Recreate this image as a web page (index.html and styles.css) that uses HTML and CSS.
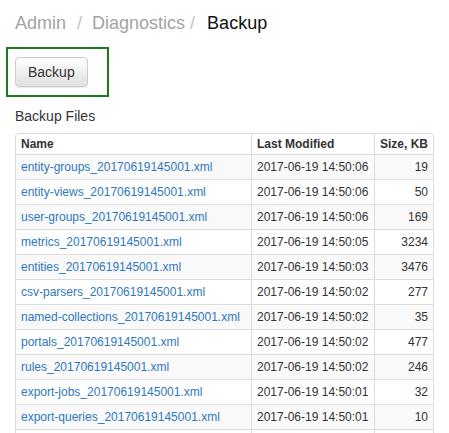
FILE: index.html
```html
<!DOCTYPE html>
<html>
<head>
<meta charset="utf-8">
<link rel="stylesheet" href="styles.css">
</head>
<body>
<div class="page">
  <div class="crumbs">
    <span class="crumb">Admin</span><span class="sep sep-a">/</span><span class="crumb">Diagnostics</span><span class="sep sep-b">/</span><span class="crumb active">Backup</span>
  </div>
  <div class="highlight">
    <button class="btn">Backup</button>
  </div>
  <div class="title">Backup Files</div>
  <table class="files">
    <thead>
      <tr><th class="c-name">Name</th><th class="c-mod">Last Modified</th><th class="c-size">Size, KB</th></tr>
    </thead>
    <tbody>
      <tr><td><a href="#">entity-groups_20170619145001.xml</a></td><td>2017-06-19 14:50:06</td><td class="num">19</td></tr>
      <tr><td><a href="#">entity-views_20170619145001.xml</a></td><td>2017-06-19 14:50:06</td><td class="num">50</td></tr>
      <tr><td><a href="#">user-groups_20170619145001.xml</a></td><td>2017-06-19 14:50:06</td><td class="num">169</td></tr>
      <tr><td><a href="#">metrics_20170619145001.xml</a></td><td>2017-06-19 14:50:05</td><td class="num">3234</td></tr>
      <tr><td><a href="#">entities_20170619145001.xml</a></td><td>2017-06-19 14:50:03</td><td class="num">3476</td></tr>
      <tr><td><a href="#">csv-parsers_20170619145001.xml</a></td><td>2017-06-19 14:50:02</td><td class="num">277</td></tr>
      <tr><td><a href="#">named-collections_20170619145001.xml</a></td><td>2017-06-19 14:50:02</td><td class="num">35</td></tr>
      <tr><td><a href="#">portals_20170619145001.xml</a></td><td>2017-06-19 14:50:02</td><td class="num">477</td></tr>
      <tr><td><a href="#">rules_20170619145001.xml</a></td><td>2017-06-19 14:50:02</td><td class="num">246</td></tr>
      <tr><td><a href="#">export-jobs_20170619145001.xml</a></td><td>2017-06-19 14:50:01</td><td class="num">32</td></tr>
      <tr><td><a href="#">export-queries_20170619145001.xml</a></td><td>2017-06-19 14:50:01</td><td class="num">10</td></tr>
      <tr class="tail"><td></td><td></td><td></td></tr>
    </tbody>
  </table>
</div>
</body>
</html>
```
FILE: styles.css
```css
html, body {
  margin: 0;
  padding: 0;
  background: #fff;
}
body {
  font-family: "Liberation Sans", Arial, sans-serif;
  color: #333;
  font-size: 14px;
}
.page {
  padding: 13px 15px 0 15px;
}
.crumbs {
  font-size: 18px;
  line-height: 20px;
  height: 20px;
  color: #a3a3a3;
  white-space: nowrap;
}
.crumb.active {
  color: #111;
}
.sep {
  color: #c4c4c4;
}
.sep-a {
  margin: 0 10px 0 11px;
}
.sep-b {
  margin: 0 12px 0 5px;
}
.highlight {
  margin: 14px 0 0 -9px;
  width: 103px;
  box-sizing: border-box;
  border: 2px solid #1c7c1c;
  padding: 8px 7px 8px 7px;
}
.btn {
  display: block;
  font-family: "Liberation Sans", Arial, sans-serif;
  font-size: 14px;
  line-height: 20px;
  height: 30px;
  padding: 4px 12px;
  color: #333;
  background: linear-gradient(to bottom, #fff 0%, #e0e0e0 100%);
  border: 1px solid #ccc;
  border-radius: 4px;
  box-shadow: inset 0 1px 0 rgba(255,255,255,.15), 0 1px 1px rgba(0,0,0,.075);
}
.title {
  margin-top: 9px;
  font-size: 14px;
  line-height: 20px;
  color: #333;
}
.files {
  margin-top: 7px;
  width: 419px;
  border-collapse: separate;
  border-spacing: 0;
  font-size: 12px;
  line-height: 16px;
  border-top: 1px solid #ddd;
  border-left: 1px solid #ddd;
  border-radius: 4px 4px 0 0;
}
.files th, .files td {
  border-right: 1px solid #ddd;
  border-bottom: 1px solid #ddd;
  text-align: left;
  white-space: nowrap;
}
.files th {
  padding: 2px 5px;
  font-weight: bold;
  color: #333;
}
.files td {
  padding: 4px 5px;
  color: #333;
}
.files tr.tail td {
  height: 16px;
}
.files th.c-name { border-top-left-radius: 4px; }
.files th.c-size { border-top-right-radius: 4px; }
.files th.c-mod { width: 112px; }
.files th.c-size { width: 47px; }
.files tbody tr:nth-child(odd) td {
  background: #f9f9f9;
}
.files td.num {
  text-align: right;
}
.files a {
  color: #2f78bd;
  text-decoration: none;
}
```
